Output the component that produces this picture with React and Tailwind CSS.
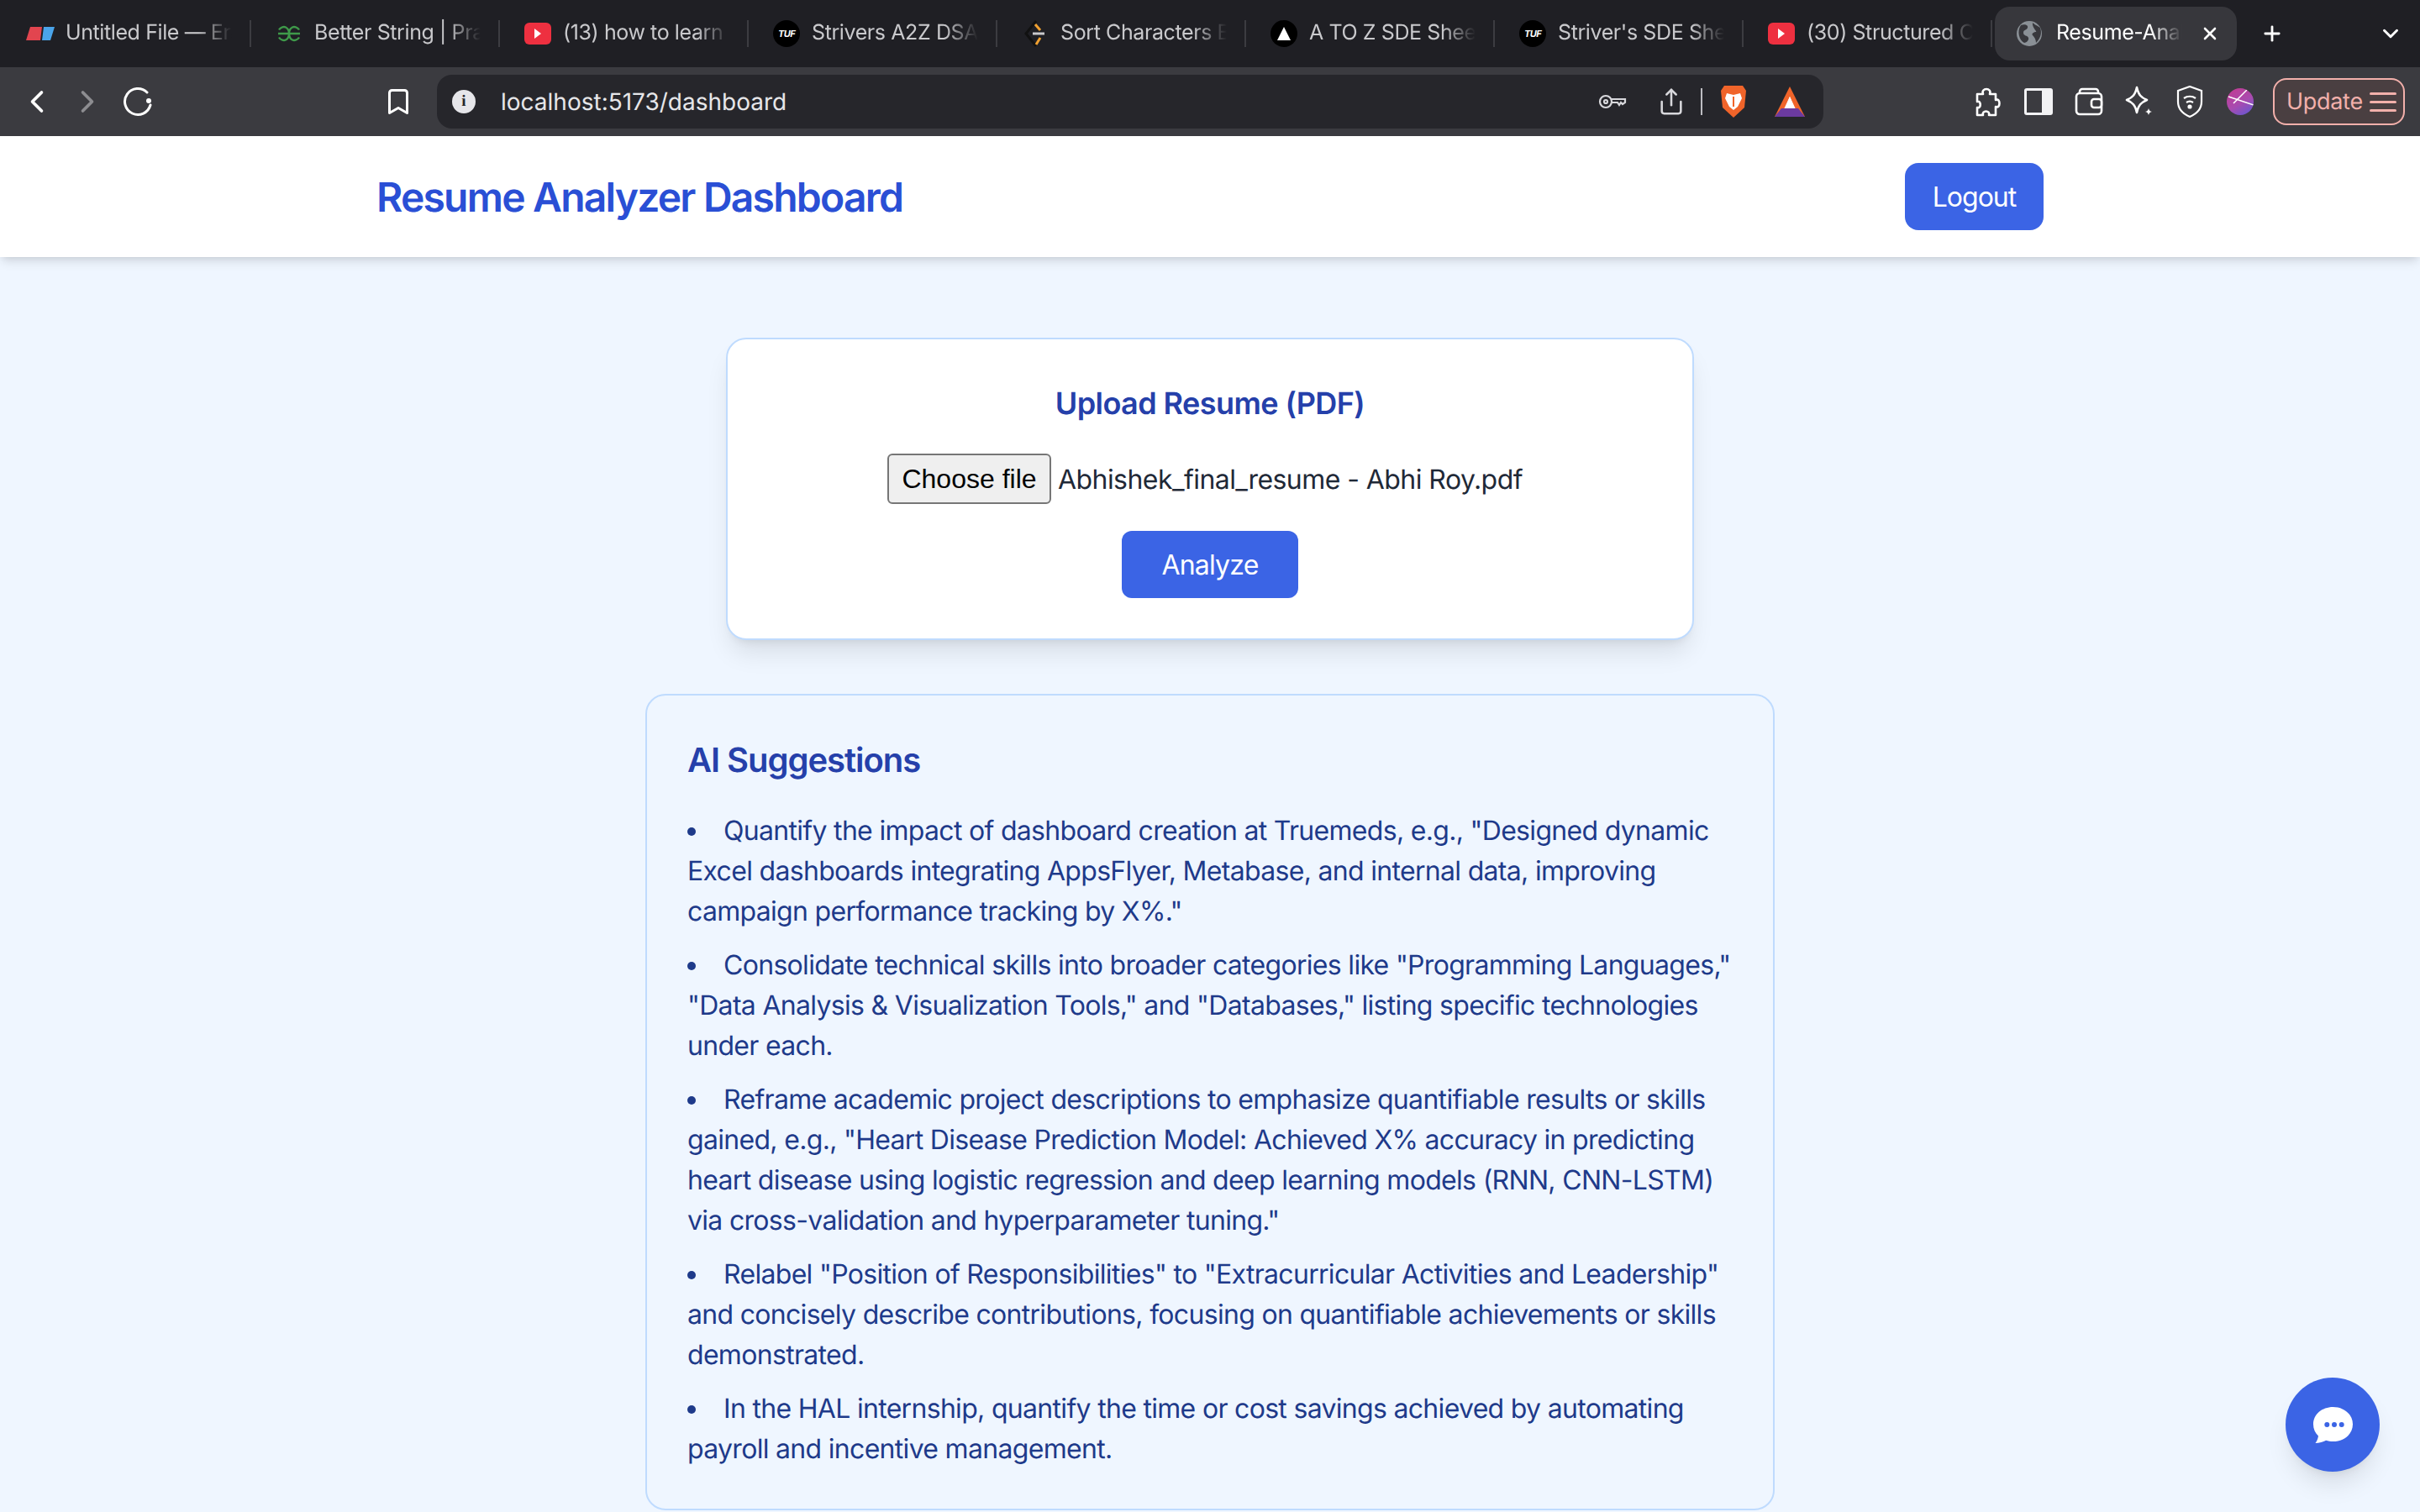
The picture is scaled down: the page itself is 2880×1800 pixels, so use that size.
import React from "react";
import { ChevronLeft, ChevronRight, Bookmark, Share, X, Plus, ChevronDown } from "lucide-react";

function Yt() {
  return (
    <svg width="32" height="26" viewBox="0 0 32 26"><rect width="32" height="26" rx="6" fill="#ee3040" /><path d="M12 7l8 6-8 6z" fill="#fff" /></svg>
  );
}
function Tuf() {
  return (
    <div className="w-[32px] h-[32px] rounded-full bg-black flex items-center justify-center text-white italic font-bold text-[11px] tracking-tighter">TUF</div>
  );
}
function Erd() {
  return (
    <svg width="34" height="20" viewBox="0 0 34 20"><path d="M5 2h14l-2 16H0z" fill="#e2454f" /><path d="M21 2h13l-5 16H19z" fill="#4aa4ea" /></svg>
  );
}
function Gfg() {
  return (
    <svg width="30" height="22" viewBox="0 0 30 22" fill="none" stroke="#3f9a4a" strokeWidth="2.400"><path d="M3 6.500C5 3 9 2.500 11 3.500 14 5 15 8 15 11 15 14 14 17 11 18.500 9 19.500 5 19 3 15.500M2 11h26M27 6.500C25 3 21 2.500 19 3.500 16 5 15 8 15 11 15 14 16 17 19 18.500 21 19.500 25 19 27 15.500" /></svg>
  );
}
function Sort() {
  return (
    <svg width="28" height="32" viewBox="0 0 28 32" fill="none" strokeWidth="3"><path d="M15 1L3 16l12 15" stroke="#111" /><path d="M14 5l6 7M20 21l-5 8" stroke="#f0a030" /><path d="M11 16h14" stroke="#c9c9cc" /></svg>
  );
}
function Tri() {
  return (
    <div className="w-[32px] h-[32px] rounded-full bg-black flex items-center justify-center">
      <svg width="16" height="16" viewBox="0 0 16 16"><path d="M8 0l8 16H0z" fill="#fff" /></svg>
    </div>
  );
}

const tabs = [
  [<Erd />, "Untitled File — Eraser"],
  [<Gfg />, "Better String | Practice"],
  [<Yt />, "(13) how to learn web"],
  [<Tuf />, "Strivers A2Z DSA Course"],
  [<Sort />, "Sort Characters By Freq"],
  [<Tri />, "A TO Z SDE Sheet Code"],
  [<Tuf />, "Striver's SDE Sheet Top"],
  [<Yt />, "(30) Structured Course"],
];

function Tab({ icon, title }) {
  return (
    <div className="w-[296px] h-[80px] flex items-center shrink-0">
      <div className="ml-[27px] w-[36px] flex justify-center shrink-0">{icon}</div>
      <div className="ml-[12px] w-[198px] overflow-hidden whitespace-nowrap text-[25px] tracking-[-0.4px] text-[#c9c9cc] [mask-image:linear-gradient(to_right,black_80%,transparent)]">{title}</div>
      <div className="ml-auto w-[2px] h-[32px] bg-[#3c3c41] shrink-0" />
    </div>
  );
}

function Slot({ children, className = "w-[60px]" }) {
  return <div className={`${className} h-[48px] flex items-center justify-center shrink-0`}>{children}</div>;
}

function Chrome() {
  return (
    <div>
      <div className="h-[80px] bg-[#1f1f24] flex items-center pl-[3px]">
        {tabs.map(([icon, title], i) => (
          <Tab key={i} icon={icon} title={title} />
        ))}
        <div className="h-[64px] w-[288px] rounded-[18px] bg-[#37373c] flex items-center shrink-0 ml-[3px]">
          <svg className="ml-[26px] shrink-0" width="30" height="30" viewBox="0 0 30 30"><circle cx="15" cy="15" r="15" fill="#8a9096" /><path d="M5 5c5-2 9 0 8 3s-5 2-5 6 5 3 6 6-3 6-5 6C3 23 0 12 5 5zM19 2c3 3 5 3 9 6 2 6 1 12-5 18 0-4-2-7-4-9s2-4 4-4-5-5-4-11z" fill="#37373c" /></svg>
          <div className="ml-[17px] w-[150px] overflow-hidden whitespace-nowrap text-[25px] tracking-[-0.4px] text-white [mask-image:linear-gradient(to_right,black_75%,transparent)]">Resume-Analyzer</div>
          <X className="ml-[21px] text-white shrink-0" size={24} strokeWidth={2.600} />
        </div>
        <Plus className="ml-[28px] text-white shrink-0" size={28} strokeWidth={2.400} />
        <ChevronDown className="ml-[112px] text-white shrink-0" size={30} strokeWidth={2.400} />
      </div>
      <div className="h-[82px] bg-[#3b3b40] flex items-center pl-[14px]">
        <Slot><ChevronLeft className="text-white" size={44} strokeWidth={2} /></Slot>
        <Slot><ChevronRight className="text-[#8d8d91]" size={44} strokeWidth={2} /></Slot>
        <Slot>
          <svg width="36" height="36" viewBox="0 0 36 36" fill="none" stroke="#fff" strokeWidth="3"><path d="M29 7A15.500 15.500 0 1 0 33 22" strokeLinecap="round" /><circle cx="31" cy="17" r="3" fill="#fff" stroke="none" /></svg>
        </Slot>
        <Slot className="w-[44px] ml-[258px]"><Bookmark className="text-white" size={36} strokeWidth={2} /></Slot>
        <div className="ml-[24px] w-[1650px] h-[64px] rounded-[18px] bg-[#26262b] flex items-center pl-[18px] pr-[22px] shrink-0">
          <div className="w-[28px] h-[28px] rounded-full bg-[#e6e6ea] flex items-center justify-center text-[#26262b] font-bold text-[19px] font-['Liberation_Serif',serif]">i</div>
          <div className="ml-[30px] text-[28px] text-[#e6e6e9]">localhost:5173/dashboard</div>
          <div className="flex-1" />
          <svg width="34" height="18" viewBox="0 0 34 18" fill="none" stroke="#d8d8dc" strokeWidth="2.200"><circle cx="9" cy="9" r="7" /><circle cx="9" cy="9" r="2" /><path d="M16 6h16v4l-3 2-2-2-2 3-2-3h-7" /></svg>
          <Share className="ml-[36px] text-[#d8d8dc]" size={34} strokeWidth={1.800} />
          <div className="ml-[18px] w-[2px] h-[32px] bg-[#bdbdc2]" />
          <svg className="ml-[20px]" width="34" height="40" viewBox="0 0 34 40"><path d="M6 1h22l4 6-2 20-13 12L4 27 2 7z" fill="#f0642a" /><path d="M9 10l8 2 8-2 2 6-5 10-5 4-5-4-5-10z" fill="#fff" /><path d="M17 14v12" stroke="#f0642a" strokeWidth="2" /></svg>
          <svg className="ml-[32px]" width="36" height="36" viewBox="0 0 36 36"><path d="M18 0l18 36H0z" fill="#f0642a" /><path d="M18 12l8 17H10z" fill="#fff" /><path d="M8 26h20l8 10H0z" fill="#6b3aa0" /><path d="M18 12l5 12H13z" fill="#fff" /></svg>
        </div>
        <Slot className="w-[60px] ml-[164px]">
          <svg width="36" height="38" viewBox="0 0 36 38" fill="none" stroke="#fff" strokeWidth="2.600" strokeLinejoin="round"><path d="M7 10h7c-3-8 11-8 8 0h7v7c6-3 6 11 0 8v10h-8c2-6-9-6-7 0H7v-9c5 2 5-9 0-7z" /></svg>
        </Slot>
        <Slot className="w-[60px] ml-[2px]">
          <div className="w-[34px] h-[32px] border-[3px] border-[#f2f2f4] rounded-[3px] flex justify-end"><div className="w-[10px] h-full bg-[#f2f2f4]" /></div>
        </Slot>
        <Slot>
          <svg width="34" height="34" viewBox="0 0 34 34" fill="none" stroke="#fff" strokeWidth="2.600"><rect x="2" y="7" width="30" height="25" rx="4" /><path d="M6 7V5a3 3 0 0 1 3-3h16a3 3 0 0 1 3 3v2" /><rect x="20" y="14" width="12" height="10" rx="3" fill="#3b3b40" /></svg>
        </Slot>
        <Slot>
          <svg width="36" height="38" viewBox="0 0 36 38" fill="none" stroke="#fff" strokeWidth="2.600" strokeLinejoin="round"><path d="M15 2c2 9 5 12 12 15-7 3-10 6-12 15-2-9-5-12-12-15 7-3 10-6 12-15z" /><path d="M29 27c.7 2.500 1.500 3.300 4 4-2.500.7-3.300 1.500-4 4-.7-2.500-1.500-3.300-4-4 2.500-.7 3.300-1.500 4-4z" fill="#fff" stroke="none" /></svg>
        </Slot>
        <Slot>
          <svg width="32" height="38" viewBox="0 0 32 38" fill="none" stroke="#fff" strokeWidth="2.200"><path d="M16 1l14 5v13c0 9-7 15-14 18C9 34 2 28 2 19V6z" /><path d="M9 15c4-3 10-3 14 0M12 20c3-2 5-2 8 0" /><circle cx="16" cy="25" r="1.500" fill="#fff" /></svg>
        </Slot>
        <Slot>
          <div className="w-[32px] h-[32px] rounded-full overflow-hidden bg-[linear-gradient(150deg,#c43a8e,#a84bb0_55%,#5a5ad8)] flex items-center justify-center">
            <svg width="32" height="32" viewBox="0 0 32 32" fill="none" stroke="#fff" strokeWidth="1.500"><path d="M2 10l30 10M24 2L8 18" /></svg>
          </div>
        </Slot>
        <div className="ml-[9px] w-[157px] h-[56px] rounded-[16px] border-2 border-[#f2b0ab] bg-[#4a3f41] flex items-center justify-between pl-[14px] pr-[8px] shrink-0">
          <span className="text-[27px] tracking-[-0.3px] text-[#f2b0ab]">Update</span>
          <div className="flex flex-col gap-[7px]">
            <div className="w-[32px] h-[3px] bg-[#f2b0ab] rounded" />
            <div className="w-[32px] h-[3px] bg-[#f2b0ab] rounded" />
            <div className="w-[32px] h-[3px] bg-[#f2b0ab] rounded" />
          </div>
        </div>
      </div>
    </div>
  );
}

const suggestions = [
  'Quantify the impact of dashboard creation at Truemeds, e.g., "Designed dynamic Excel dashboards integrating AppsFlyer, Metabase, and internal data, improving campaign performance tracking by X%."',
  'Consolidate technical skills into broader categories like "Programming Languages," "Data Analysis & Visualization Tools," and "Databases," listing specific technologies under each.',
  'Reframe academic project descriptions to emphasize quantifiable results or skills gained, e.g., "Heart Disease Prediction Model: Achieved X% accuracy in predicting heart disease using logistic regression and deep learning models (RNN, CNN-LSTM) via cross-validation and hyperparameter tuning."',
  'Relabel "Position of Responsibilities" to "Extracurricular Activities and Leadership" and concisely describe contributions, focusing on quantifiable achievements or skills demonstrated.',
  'In the HAL internship, quantify the time or cost savings achieved by automating payroll and incentive management.',
];

export default function App() {
  return (
    <div className="w-[2880px] h-[1800px] overflow-hidden bg-[#eff6ff] font-['Inter',sans-serif] [text-rendering:geometricPrecision] relative">
      <Chrome />
      <header className="bg-white h-[144px] shadow-[0_8px_12px_-2px_rgba(0,0,0,0.1),0_4px_8px_-4px_rgba(0,0,0,0.1)] relative">
        <div className="w-[1984px] mx-auto h-full flex items-center justify-between">
          <h1 className="pt-[2px] text-[48px] font-semibold tracking-[-1.78px] text-[#2a4fd5]">Resume Analyzer Dashboard</h1>
          <button className="w-[165px] h-[80px] pt-[2px] rounded-[16px] bg-[#3b64e5] text-white text-[32px] tracking-[-1px]">Logout</button>
        </div>
      </header>
      <main className="flex flex-col items-center pt-[96px]">
        <section className="w-[1152px] h-[360px] bg-white border-2 border-[#bfdbfe] rounded-[24px] shadow-[0_20px_30px_-6px_rgba(0,0,0,0.1),0_8px_12px_-8px_rgba(0,0,0,0.1)] pt-[48px] flex flex-col items-center">
          <h2 className="text-[36px] leading-[56px] font-semibold tracking-[-0.58px] text-[#2540aa] text-center">Upload Resume (PDF)</h2>
          <div className="mt-[32px] w-[768px] flex items-center h-[60px]">
            <button className="w-[195px] h-[60px] bg-[#efefef] border-2 border-[#767676] rounded-[6px] text-[32px] text-black font-['Liberation_Sans',sans-serif] shrink-0">Choose file</button>
            <span className="ml-[8px] pt-[1px] text-[32px] tracking-[-0.56px] text-[#1f2937] whitespace-nowrap">Abhishek_final_resume - Abhi Roy.pdf</span>
          </div>
          <button className="mt-[32px] w-[210px] h-[80px] pt-[2px] rounded-[12px] bg-[#3b64e5] text-white text-[32px] tracking-[-0.8px]">Analyze</button>
        </section>
        <section className="mt-[64px] w-[1344px] h-[972px] shrink-0 border-2 border-[#bfdbfe] rounded-[24px] bg-[#eff6ff] pt-[49px] px-[48px]">
          <h2 className="text-[40px] leading-[56px] font-semibold tracking-[-1.05px] text-[#2540aa]">AI Suggestions</h2>
          <ul className="mt-[32px] list-disc list-inside flex flex-col gap-[16px] text-[32px] leading-[48px] tracking-[-0.69px] text-[#1e3a8a]">
            {suggestions.map((s, i) => (
              <li key={i}>{s}</li>
            ))}
          </ul>
        </section>
      </main>
      <button className="absolute right-[48px] bottom-[48px] w-[112px] h-[112px] rounded-full bg-[#3b64e5] shadow-[0_20px_30px_-6px_rgba(0,0,0,0.1),0_8px_12px_-8px_rgba(0,0,0,0.1)] flex items-center justify-center">
        <svg width="47" height="43" viewBox="0 0 47 43"><path d="M23.500 0C36.500 0 47 8.700 47 20.500S36.500 41 23.500 41c-3 0-5.800-.5-8.400-1.300C12 41.500 7 43 2.500 43c1.700-2 3-5 3.500-8.500C2.200 30.800 0 26 0 20.500 0 8.700 10.500 0 23.500 0z" fill="#fff" /><circle cx="16.300" cy="21" r="3" fill="#3b64e5" /><circle cx="25" cy="21" r="3" fill="#3b64e5" /><circle cx="33.700" cy="21" r="3" fill="#3b64e5" /></svg>
      </button>
    </div>
  );
}
